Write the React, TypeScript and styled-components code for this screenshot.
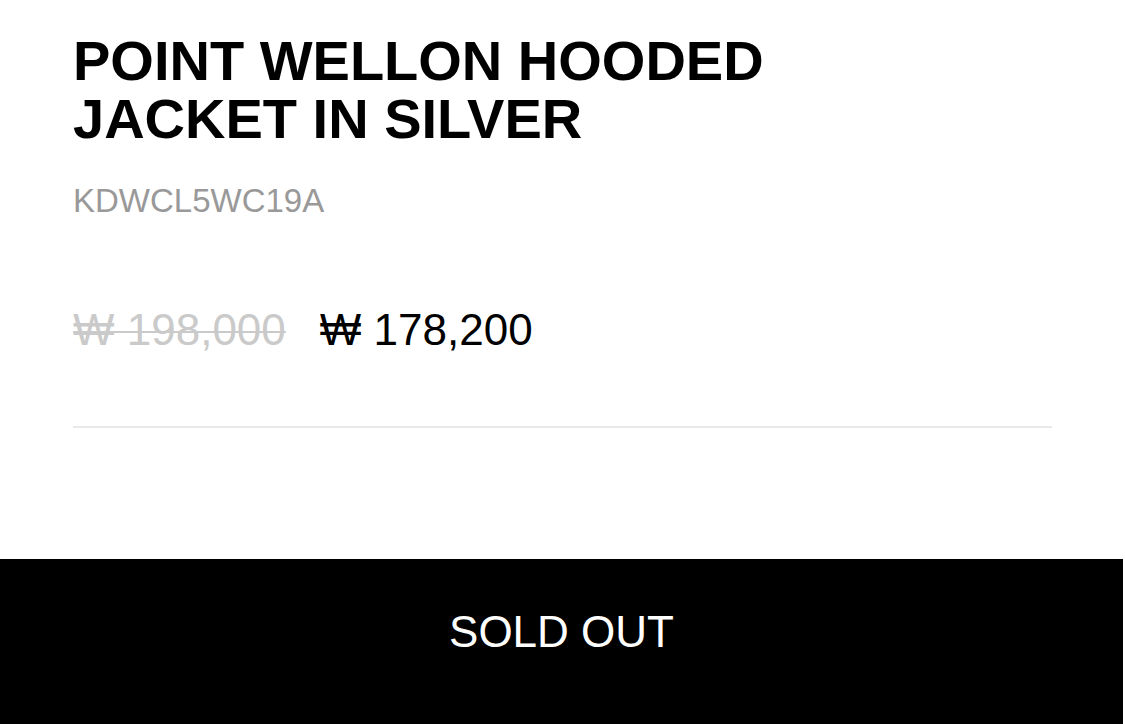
import React from "react";
import styled, { createGlobalStyle } from "styled-components";

const GlobalStyle = createGlobalStyle`
  html, body {
    margin: 0;
    padding: 0;
    background: #fff;
    overflow: hidden;
  }
  body {
    font-family: "Liberation Sans", Arial, Helvetica, sans-serif;
    -webkit-font-smoothing: antialiased;
  }
`;

const Page = styled.div`
  width: 1125px;
  height: 724px;
  display: flex;
  flex-direction: column;
`;

const Info = styled.section`
  padding: 32px 73px 0;
  display: flex;
  flex-direction: column;
`;

const Title = styled.h1`
  margin: 0;
  font-size: 56px;
  line-height: 58px;
  font-weight: 700;
  color: #000;
  text-transform: uppercase;
`;

const Sku = styled.p`
  margin: 33px 0 0;
  font-size: 33px;
  line-height: 40px;
  color: #999;
`;

const PriceRow = styled.div`
  margin-top: 83px;
  display: flex;
  align-items: baseline;
  gap: 34px;
  font-size: 44px;
  line-height: 52px;
`;

const Price = styled.span<{ $old?: boolean }>`
  color: ${(p) => (p.$old ? "#cacaca" : "#000")};
  text-decoration: ${(p) => (p.$old ? "line-through" : "none")};
  text-decoration-thickness: 2px;
`;

const Divider = styled.hr`
  margin: 70px 0 0;
  border: 0;
  height: 2px;
  background: #e8e8e8;
`;

const SoldOutButton = styled.button`
  margin-top: 131px;
  width: 1123px;
  flex: 1;
  border: 0;
  background: #000;
  color: #fff;
  font-family: inherit;
  font-size: 44px;
  line-height: 52px;
  padding: 47px 0 0;
  display: flex;
  justify-content: center;
  align-items: flex-start;
  cursor: not-allowed;
`;

export default function App() {
  return (
    <>
      <GlobalStyle />
      <Page>
        <Info>
          <Title>
            Point Wellon Hooded
            <br />
            Jacket in Silver
          </Title>
          <Sku>KDWCL5WC19A</Sku>
          <PriceRow>
            <Price $old>₩ 198,000</Price>
            <Price>₩ 178,200</Price>
          </PriceRow>
          <Divider />
        </Info>
        <SoldOutButton disabled>SOLD OUT</SoldOutButton>
      </Page>
    </>
  );
}
